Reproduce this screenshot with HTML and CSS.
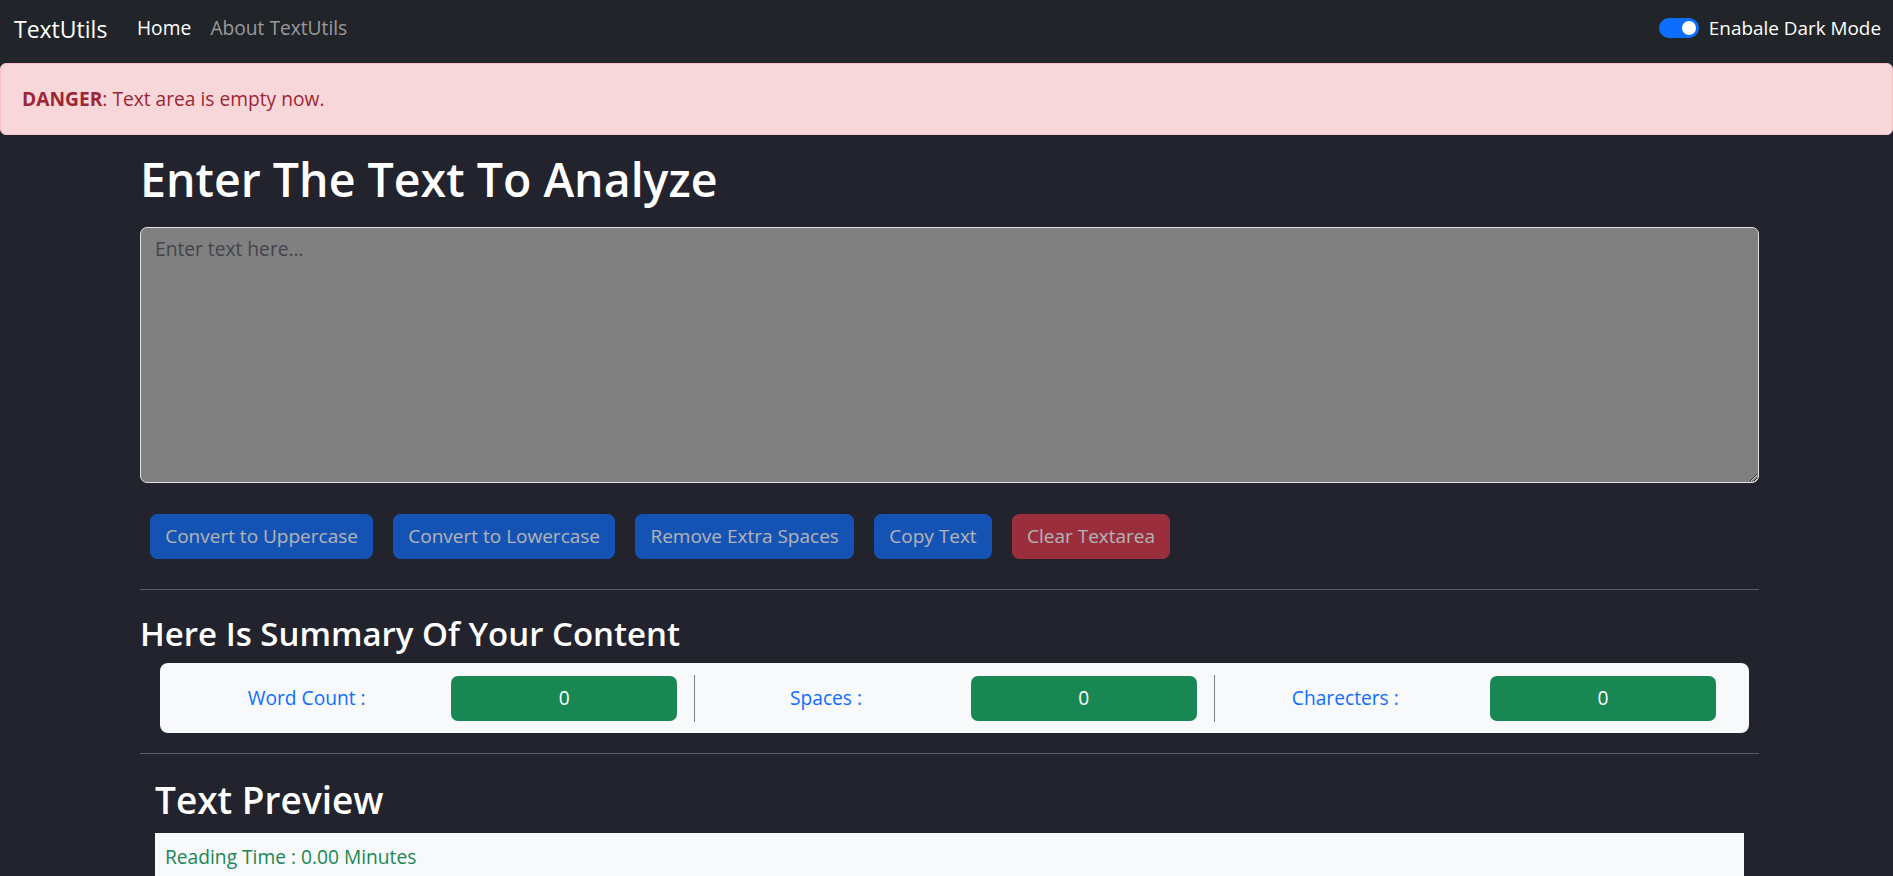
FILE: index.html
```html
<!DOCTYPE html>
<html lang="en">
<head>
<meta charset="utf-8">
<title>TextUtils - Home</title>
<link rel="stylesheet" href="styles.css">
</head>
<body>
<nav class="navbar">
  <div class="nav-left">
    <a class="brand" href="#">TextUtils</a>
    <ul class="nav-links">
      <li><a class="nav-link active" href="#">Home</a></li>
      <li><a class="nav-link" href="#">About TextUtils</a></li>
    </ul>
  </div>
  <div class="switch-wrap">
    <span class="switch"><span class="knob"></span></span>
    <label class="switch-label">Enabale Dark Mode</label>
  </div>
</nav>

<div class="alert"><strong>DANGER</strong>: Text area is empty now.</div>

<main class="container">
  <h1 class="title">Enter The Text To Analyze</h1>
  <textarea class="text-input" placeholder="Enter text here..."></textarea>

  <div class="btn-row">
    <button class="btn btn-primary">Convert to Uppercase</button>
    <button class="btn btn-primary">Convert to Lowercase</button>
    <button class="btn btn-primary">Remove Extra Spaces</button>
    <button class="btn btn-primary">Copy Text</button>
    <button class="btn btn-danger">Clear Textarea</button>
  </div>

  <hr class="rule rule-first">

  <h3 class="summary-title">Here Is Summary Of Your Content</h3>
  <div class="summary-card">
    <div class="stat">
      <span class="stat-label">Word Count :</span>
      <span class="stat-value">0</span>
    </div>
    <span class="vr"></span>
    <div class="stat">
      <span class="stat-label">Spaces :</span>
      <span class="stat-value">0</span>
    </div>
    <span class="vr"></span>
    <div class="stat">
      <span class="stat-label">Charecters :</span>
      <span class="stat-value">0</span>
    </div>
  </div>

  <hr class="rule rule-second">

  <h2 class="preview-title">Text Preview</h2>
  <div class="preview-box">
    <p class="reading-time">Reading Time : 0.00 Minutes</p>
  </div>
</main>
</body>
</html>
```

FILE: styles.css
```css
* { box-sizing: border-box; }

html, body {
  margin: 0;
  padding: 0;
}

body {
  background: #22232d;
  color: #fff;
  font-family: "Open Sans", "Noto Sans", "Liberation Sans", sans-serif;
  font-size: 19.2px;
  line-height: 1.5;
}

/* Navbar */
.navbar {
  height: 62px;
  background: #212529;
  display: flex;
  align-items: center;
  justify-content: space-between;
  padding: 0 12px 5px 14px;
}

.nav-left {
  display: flex;
  align-items: center;
}

.brand {
  color: #fff;
  text-decoration: none;
  font-size: 23px;
  line-height: 36px;
  margin-right: 20px;
}

.nav-links {
  list-style: none;
  margin: 0;
  padding: 0;
  display: flex;
}

.nav-link {
  display: block;
  padding: 0 9.6px;
  color: rgba(255, 255, 255, 0.55);
  text-decoration: none;
  line-height: 28.8px;
}

.nav-link.active { color: #fff; }

.switch-wrap {
  display: flex;
  align-items: center;
}

.switch {
  width: 40px;
  height: 20px;
  border-radius: 10px;
  background: #0d6efd;
  display: flex;
  align-items: center;
  justify-content: flex-end;
  padding-right: 3px;
}

.knob {
  width: 14px;
  height: 14px;
  border-radius: 50%;
  background: #fff;
}

.switch-label {
  margin-left: 10px;
  color: #fff;
  font-size: 18.9px;
}

/* Alert */
.alert {
  height: 72px;
  display: flex;
  align-items: center;
  padding: 0 21px;
  background: #f8d7da;
  border: 1px solid #f5c2c7;
  border-radius: 6px;
  color: #9e2535;
  margin-top: 1px;
}

.alert strong {
  font-weight: 700;
}

/* Main container */
.container {
  margin: 0 134px 0 140px;
}

.title {
  font-size: 46.5px;
  font-weight: 600;
  line-height: 57.6px;
  margin: 16px 0 18px;
}

.text-input {
  display: block;
  width: 100%;
  height: 256px;
  background: #808080;
  border: 1px solid #dee2e6;
  border-radius: 7px;
  padding: 7px 14px;
  font-family: inherit;
  font-size: 19.2px;
  line-height: 28.8px;
  color: #212529;
}

.text-input::placeholder {
  color: #43454c;
}

.btn-row {
  display: flex;
  margin-top: 31px;
}

.btn {
  font-family: inherit;
  font-size: 19px;
  line-height: 28.8px;
  padding: 7.2px 14.4px;
  border: 1.2px solid transparent;
  border-radius: 7.2px;
  color: #fff;
  margin: 0 9.8px;
  opacity: 0.65;
}

.btn-primary { background: #0d6efd; border-color: #0d6efd; }
.btn-danger { background: #dc3545; border-color: #dc3545; }

.rule {
  border: 0;
  border-top: 1px solid #5b5c66;
  margin: 0;
}

.rule-first { margin-top: 30px; margin-bottom: 24px; }

.summary-title {
  font-size: 33px;
  font-weight: 600;
  line-height: 40px;
  margin: 0 0 9px;
}

.summary-card {
  margin: 0 10px 0 20px;
  background: #f8f9fa;
  border-radius: 8px;
  padding: 12px 16px 11px 16px;
  display: flex;
  align-items: center;
}

.stat {
  flex: 1;
  display: flex;
  align-items: center;
}

.stat-label {
  flex: 1;
  text-align: center;
  color: #0d6efd;
  margin-right: 14px;
}

.stat-value {
  width: 226px;
  height: 45px;
  display: flex;
  align-items: center;
  justify-content: center;
  background: #198754;
  color: #fff;
  border-radius: 7px;
  margin-right: 17px;
}

.vr {
  width: 1px;
  height: 47px;
  background: #7b7e83;
}

.rule-second { margin-top: 20px; margin-bottom: 23px; }

.preview-title {
  font-size: 37px;
  font-weight: 600;
  line-height: 46px;
  margin: 0 15px 10px;
}

.preview-box {
  margin: 0 15px;
  background: #f8f9fa;
  padding: 10px 10px 20px;
}

.reading-time {
  margin: 0;
  color: #198754;
}
```
